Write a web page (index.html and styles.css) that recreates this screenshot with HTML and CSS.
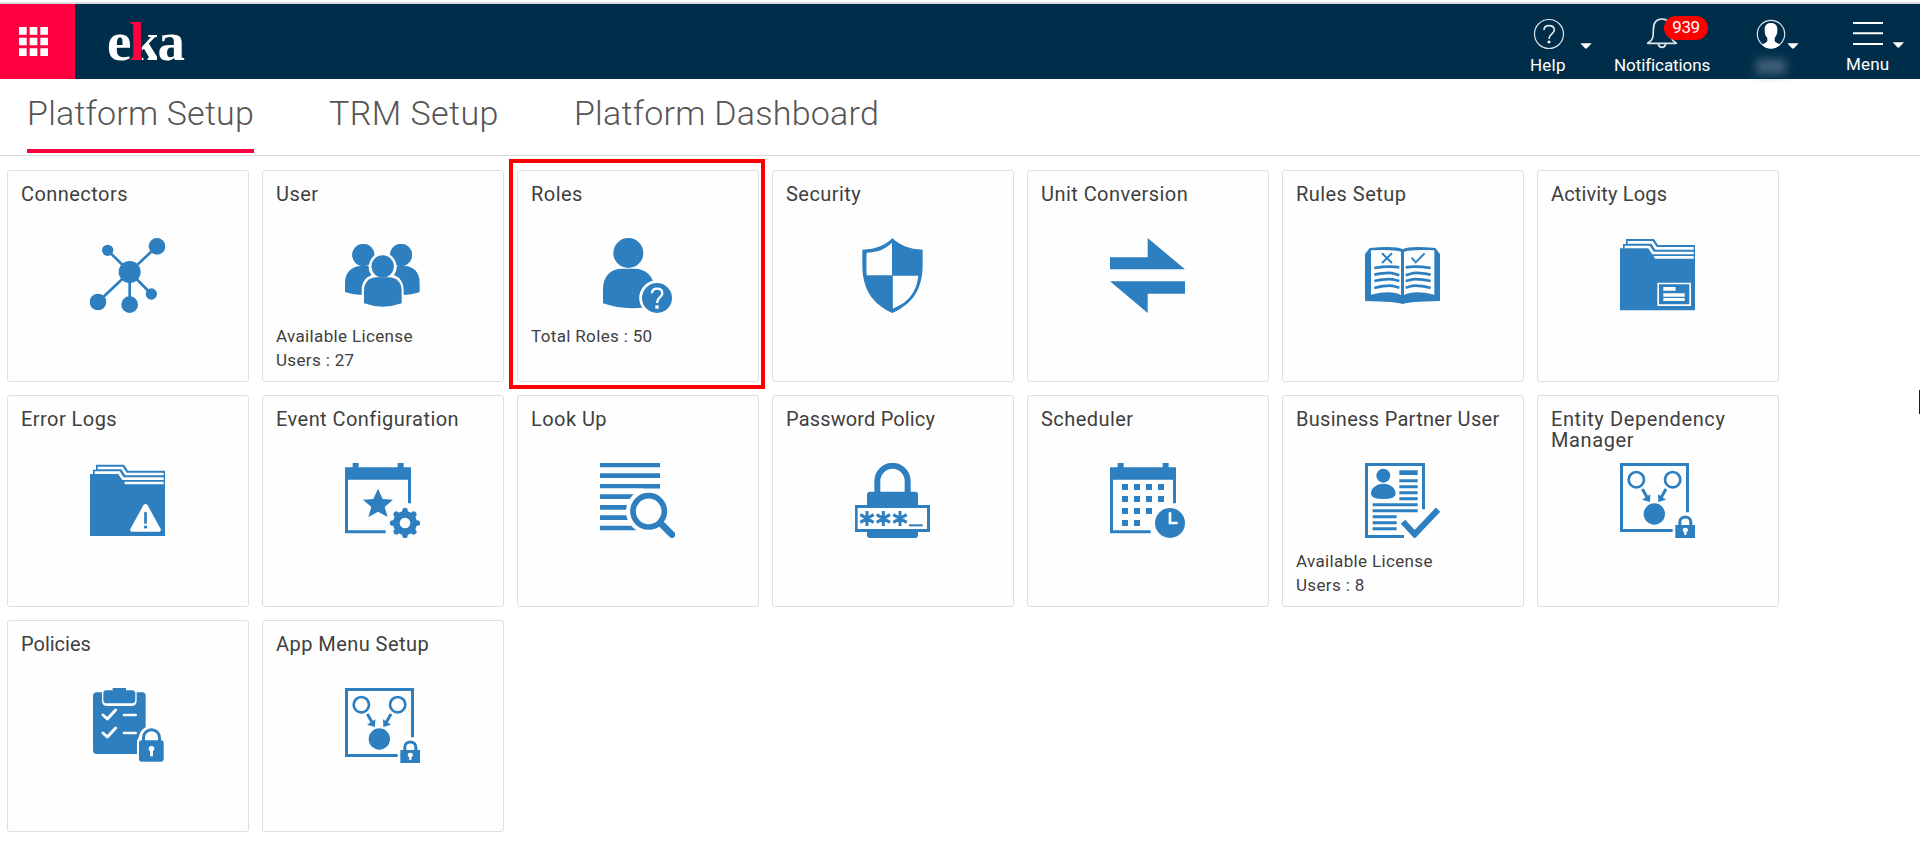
FILE: index.html
```
<!DOCTYPE html>
<html lang="en">
<head>
<meta charset="utf-8">
<title>Platform Setup</title>
<link rel="stylesheet" href="styles.css">
</head>
<body>
<header class="topbar">
  <div class="apps">
    <svg class="apps-icon" viewBox="0 0 87 87"><path d="M0 0h23v23H0zM32 0h23v23H32zM64 0h23v23H64zM0 32h23v23H0zM32 32h23v23H32zM64 32h23v23H64zM0 64h23v23H0zM32 64h23v23H32zM64 64h23v23H64z"/></svg>
  </div>
  <div class="logo">e<span class="logo-k">k</span>a</div>
  <nav class="tools">
    <div class="tool help">
      <svg class="tool-icon" viewBox="75 12 240 150"><circle cx="147" cy="102" r="43.500" class="thin"/><path d="M132 90q0-13 15-13 16 0 16 13c0 12-16 12-16 27" class="thin q"/><path class="solid" d="M143 122h8v8h-8zM241 130h34l-14 15q-3 2-6 0z"/></svg>
      <span class="label">Help</span>
    </div>
    <div class="tool notif">
      <svg class="tool-icon" viewBox="315 12 420 150"><path class="thin bell" d="M443 130c18-10 17-22 17-40 0-20 8-33 26-33s26 13 26 33c0 18-1 30 17 40zM475 132q2 10 11 10t11-10"/></svg>
      <span class="badge">939</span>
      <span class="label">Notifications</span>
    </div>
    <div class="tool user">
      <svg class="tool-icon" viewBox="735 12 285 150"><circle cx="813" cy="102" r="41" class="thin"/><path class="solid" d="M813 69c14 0 20 9 19 22 0 12-4 18-8 23v8c2 6 9 7 17 12q-12 12-28 12t-28-12c8-5 15-6 17-12v-8c-5-5-8-11-8-23-1-13 5-22 19-22zM862 130h34l-14 15q-3 2-6 0z"/></svg>
      <span class="masked"></span>
    </div>
    <div class="tool menu">
      <svg class="tool-icon" viewBox="1020 12 240 150"><path class="solid" d="M1059 66h90v6h-90zM1059 97h90v6h-90zM1059 129h90v6h-90zM1178 127h34l-14 15q-3 2-6 0z"/></svg>
      <span class="label">Menu</span>
    </div>
  </nav>
</header>
<nav class="tabs">
  <a class="tab active">Platform Setup</a>
  <a class="tab wide">TRM Setup</a>
  <a class="tab">Platform Dashboard</a>
</nav>
<main class="grid">
  <section class="card"><h2 class="title">Connectors</h2>
    <svg class="icon" viewBox="270 234 225 225"><path class="s8" d="M323 271l66 65 82-77M389 336l-95 90M389 336v98M389 336l65 66"/><circle cx="389" cy="336" r="33"/><circle cx="471" cy="259" r="25"/><circle cx="323" cy="271" r="17"/><circle cx="294" cy="426" r="25"/><circle cx="389" cy="434" r="25"/><circle cx="454" cy="402" r="17"/></svg>
  </section>
  <section class="card"><h2 class="title">User</h2>
    <svg class="icon" viewBox="1035 234 225 225"><circle cx="1090" cy="285" r="33"/><circle cx="1203" cy="285" r="33"/><path d="M1035 396v-28c0-30 20-50 48-50h130c28 0 46 20 46 50v28q-24 9-54 9h-110q-36 0-60-9z"/><path class="w" d="M1085 405v-13c0-25 12-40 29-46a42 42 0 1 1 68 0c18 6 29 22 29 46v50h-126zM1124 318V240h48v78z"/><circle cx="1090" cy="285" r="33"/><circle cx="1203" cy="285" r="33"/><circle class="w" cx="1148" cy="319" r="41"/><circle cx="1148" cy="319" r="33.500"/><path d="M1092 430v-38c0-25 16-40 38-40h36c24 0 39 16 39 40v38q-57 20-113 0z"/></svg>
    <p class="detail">Available License<br>Users : 27</p>
  </section>
  <section class="card highlight"><h2 class="title">Roles</h2>
    <svg class="icon" viewBox="285 249 225 225"><circle cx="370" cy="294" r="45"/><path d="M294 445v-45c0-36 24-59 56-59h38c32 0 56 19 62 59v52q-85 18-156-7z"/><circle class="w" cx="456" cy="429" r="53.500"/><circle cx="456" cy="429" r="45"/><path class="ws7" d="M441 415q0-14 15-14 16 0 16 14c0 12-16 12-16 29"/><path class="w" d="M451 451h10v10h-10z"/></svg>
    <p class="detail">Total Roles : 50</p>
  </section>
  <section class="card"><h2 class="title">Security</h2>
    <svg class="icon" viewBox="1050 249 225 225"><path d="M1162 249c20 20 50 34 91 35v46c0 70-28 116-91 144-62-28-90-74-90-144v-46c42-1 72-15 90-35z"/><path class="w" d="M1161 263v98h-76c-1-20-1-45 0-68 30-1 56-10 76-30zM1163.500 362.500h76c-3 40-24 80-76 98z"/></svg>
  </section>
  <section class="card"><h2 class="title">Unit Conversion</h2>
    <svg class="icon" viewBox="270 234 225 225"><path d="M383 234l112 94H270v-36h113zM270 364h225v37H383v58z"/></svg>
  </section>
  <section class="card"><h2 class="title">Rules Setup</h2>
    <svg class="icon" viewBox="1035 234 225 225"><path d="M1035 282l14-18q80-7 99 4 20-11 98-4l14 18v141q-95 2-112 9-18-7-113-9z"/><path class="w" d="M1053 271q67-4 90 4v130q-30-16-90-1zM1152 275q24-8 91-4v133q-60-15-91 1z"/><path class="s8" d="M1063 324q44-7 75-2M1063 344q44-9 60-3l15 5M1063 363q44-9 60-4l15 4M1063 384q44-11 60-5l15 4M1232 324q-44-7-75-2M1232 344q-44-9-60-3l-15 5M1232 363q-44-9-60-4l-15 4M1232 384q-44-11-60-5l-15 4"/><path class="s6" d="M1086 280l30 29M1116 280l-30 29M1175 293l12 14 27-27"/></svg>
  </section>
  <section class="card"><h2 class="title snug">Activity Logs</h2>
    <svg class="icon" viewBox="300 234 225 225"><path d="M300 265h9v-13h9v-15h84l12 18h111v196H300z"/><path class="ws8" d="M323 247h73l12 18h113M314 261h73l12 18h122M404 292h117"/><path class="w" d="M400 288h8v8z"/><path class="ws5" d="M414.500 370.500h96v65h-96z"/><path class="w" d="M430 381h37v11h-37zM430 400h64v10h-64zM430 414h64v9h-64z"/></svg>
  </section>
  <section class="card"><h2 class="title">Error Logs</h2>
    <svg class="icon" viewBox="270 234 225 225"><path d="M270 267h9v-13h9v-15h84l12 18h111v196H270z"/><path class="ws8" d="M293 249h73l12 18h113M284 263h73l12 18h122M374 294h117"/><path class="w" d="M430 361q6-8 13 0l39 71q2 8-5 8h-81q-7 0-5-8z"/><path class="s8" d="M436.500 384v29" stroke-linecap="round"/><path d="M432 422h9v8h-9z"/></svg>
  </section>
  <section class="card"><h2 class="title">Event Configuration</h2>
    <svg class="icon" viewBox="1035 234 225 225"><path d="M1035 247h23v-13h18v13h117v-13h18v13h22v108h-9v-71h-180v152h113v9h-122z"/><path d="M1134 311l14 31 31 2-25 22 9 30-29-16-29 16 9-30-25-22 31-2z"/><circle cx="1215" cy="414" r="36"/><path class="gear" d="M1215 377v74M1178 414h74M1189 388l52 52M1241 388l-52 52"/><circle class="w" cx="1215" cy="414" r="16"/></svg>
  </section>
  <section class="card"><h2 class="title">Look Up</h2>
    <svg class="icon" viewBox="270 234 225 225"><path d="M270 234h180v13H270zM270 265h180v14H270zM270 297h180v13H270zM270 328h110v14H270zM270 360h110v14H270zM270 391h110v14H270zM270 422h120v14H270z"/><circle class="w" cx="416" cy="379" r="68"/><path d="M400 297h50v13h-50z"/><circle class="ring17" cx="416" cy="379" r="47"/><path class="handle" d="M452 415l34 34"/></svg>
  </section>
  <section class="card"><h2 class="title snug">Password Policy</h2>
    <svg class="icon" viewBox="1035 234 225 225"><path class="s18" d="M1102 325v-37a45.500 45.500 0 0 1 91 0v37"/><rect x="1071" y="320" width="153" height="139" rx="9"/><path d="M1035 360h225v81h-225z"/><path class="w" d="M1043 369h208v63h-208z"/><path class="s9" d="M1071 378v45M1051 389l40 23M1091 389l-40 23M1120 378v45M1100 389l40 23M1140 389l-40 23M1170 378v45M1150 389l40 23M1190 389l-40 23"/><path d="M1197 418h41v6h-41z"/></svg>
  </section>
  <section class="card"><h2 class="title">Scheduler</h2>
    <svg class="icon" viewBox="270 234 225 225"><path d="M270 247h23v-13h18v13h117v-13h18v13h22v108h-9v-71H279v152h113v9H270z"/><path d="M306 297h18v18h-18zM342 297h18v18h-18zM378 297h18v18h-18zM414 297h18v18h-18zM306 333h18v18h-18zM342 333h18v18h-18zM378 333h18v18h-18zM414 333h18v18h-18zM306 369h18v18h-18zM342 369h18v18h-18zM378 369h18v18h-18zM306 405h18v18h-18zM342 405h18v18h-18z"/><circle cx="450" cy="414" r="45"/><path class="ws8" d="M450 382v32h23"/></svg>
  </section>
  <section class="card"><h2 class="title mid">Business Partner User</h2>
    <svg class="icon" viewBox="1035 234 225 225"><path d="M1035 234h180v139h-9V243h-162v207h108v9h-117z"/><circle cx="1090" cy="272" r="21"/><path d="M1053 326c0-17 16-30 37-30s37 13 37 30q0 16-37 16t-37-16zM1138 256h55v14h-55zM1138 283h55v9h-55zM1138 301h55v9h-55zM1138 319h55v9h-55zM1138 337h55v9h-55zM1058 355h135v9h-135zM1058 373h135v9h-135zM1058 391h72v9h-72zM1058 409h72v9h-72zM1058 427h72v9h-72z"/><path class="s18" d="M1149 410l35 38 70-74"/></svg>
    <p class="detail">Available License<br>Users : 8</p>
  </section>
  <section class="card"><h2 class="title loose">Entity Dependency Manager</h2>
    <svg class="icon" viewBox="300 234 225 225"><g id="entity"><path d="M300 234h207v148h-9V243H309v189h149v9H300z"/><path class="s8" d="M372 284a23 23 0 1 1-46 0 23 23 0 0 1 46 0zM481 284a23 23 0 1 1-46 0 23 23 0 0 1 46 0z"/><circle cx="403" cy="387" r="32"/><path class="s9" d="M367 312l15 26M438 312l-15 26"/><path d="M391 328l-1 23-24-7zM414 328l1 23 23-7zM466 420h59v39h-59z"/><path class="s9" d="M479.500 422v-11a16.500 15 0 0 1 33 0v11"/><path class="w" d="M488 434q0-6 8-6t8 6q0 5-4 7l-1 9h-6l-1-9q-4-2-4-7z"/></g></svg>
  </section>
  <section class="card"><h2 class="title flat">Policies</h2>
    <svg class="icon" viewBox="270 234 225 225"><rect x="279" y="247" width="158" height="185" rx="11"/><path class="w" d="M306 240h104v32q0 16-16 16h-72q-16 0-16-16z"/><path d="M310 251q0-10 10-10h18v-7h40v7h17q11 0 11 10v18q0 11-11 11h-74q-11 0-11-11z"/><path class="check" d="M309 315l13 12 25-27M309 369l13 12 25-27"/><path class="ws8" d="M372 315h35M372 369h35" stroke-linecap="round"/><path class="w" d="M411 459v-68q4-4 6-12c3-18 18-31 37-31h41v111z"/><path class="s9" d="M430.500 396v-13a24 24 0 0 1 48 0v13"/><rect x="417" y="391" width="74" height="64" rx="7"/><path class="w" d="M446 416q0-8 8.500-8t8.500 8q0 5-4 7v16h-9v-16q-4-2-4-7z"/></svg>
  </section>
  <section class="card"><h2 class="title">App Menu Setup</h2>
    <svg class="icon" viewBox="300 234 225 225"><use href="#entity"/></svg>
  </section>
</main>
<div class="edge-mark"></div>
</body>
</html>
```
FILE: styles.css
```
* { box-sizing: border-box; }
body { margin: 0; height: 843px; overflow: hidden; background: #fff; font-family: Roboto, "Liberation Sans", sans-serif; color: #3f3f3f; }
.topbar { display: flex; height: 77px; margin-top: 2px; border-top: 2px solid #d9dbde; background: #002e4a; color: #fff; }
.apps { width: 75px; height: 75px; background: #ff0041; padding: 23px 19px; }
.apps-icon { display: block; width: 29px; height: 29px; fill: #fff; }
.logo { margin-left: 32px; font: bold 55px/75px "Liberation Serif", serif; letter-spacing: -2.3px; height: 75px; }
.logo-k { color: transparent; background: linear-gradient(90deg, #ff0041 13px, #fff 13px); -webkit-background-clip: text; background-clip: text; }
.tools { display: flex; margin-left: auto; }
.tool { position: relative; height: 75px; }
.help { width: 80px; }
.notif { width: 140px; }
.user { width: 95px; }
.menu { width: 80px; }
.tool-icon { display: block; width: 100%; height: 50px; }
.thin { fill: none; stroke: #dfe6ea; stroke-width: 3.500; }
.q { stroke-width: 5; }
.bell { stroke-width: 5; stroke-linejoin: round; }
.solid { fill: #fff; }
.label { display: block; font-size: 17px; line-height: 22px; }
.help .label { margin-left: 5px; letter-spacing: .2px; }
.notif .label { margin-left: 9px; letter-spacing: -.08px; }
.menu .label { margin-left: 6px; line-height: 20px; letter-spacing: .2px; }
.badge { position: absolute; left: 59px; top: 12px; width: 44px; height: 24px; border-radius: 12px; background: #f00; font-size: 17px; line-height: 23px; text-align: center; letter-spacing: -.4px; }
.masked { display: block; width: 30px; height: 15px; margin: 5px 0 0 11px; background: #3f5f77; filter: blur(4px); }
.tabs { display: flex; height: 77px; padding-left: 27px; gap: 75px; border-bottom: 1px solid #d9dadb; }
.tab { height: 74px; font-size: 34px; font-weight: 300; line-height: 69px; white-space: nowrap; letter-spacing: .26px; color: #555; }
.wide { letter-spacing: .45px; }
.active { width: 227px; border-bottom: 4px solid #ff0041; letter-spacing: .2px; }
.grid { display: grid; grid-template-columns: repeat(7, 242px); grid-auto-rows: 212px; gap: 13px; padding: 14px 0 0 7px; }
.card { position: relative; display: flex; flex-direction: column; border: 1px solid #dedfdf; border-radius: 3px; background: #fefefe; padding: 13px 13px 0; }
.highlight::after { content: ""; position: absolute; box-sizing: border-box; left: -9px; top: -12px; width: 256px; height: 230px; border: 4px solid #f00; }
.title { margin: 0; height: 54px; font-size: 20px; font-weight: 400; line-height: 21px; letter-spacing: .45px; }
.snug { letter-spacing: .15px; }
.mid { letter-spacing: .3px; }
.loose { letter-spacing: .6px; }
.flat { letter-spacing: 0; }
.icon { display: block; flex: none; width: 75px; height: 75px; margin-left: 69px; fill: #2d7fbf; }
.detail { margin: 11px 0 0; font-size: 17px; line-height: 24px; letter-spacing: .35px; }
.w { fill: #fefefe; }
.s6, .s8, .s9, .s18, .gear, .ring17, .handle { fill: none; stroke: #2d7fbf; }
.s6 { stroke-width: 6; }
.s8 { stroke-width: 8; }
.s9 { stroke-width: 9; }
.s18 { stroke-width: 18; }
.gear { stroke-width: 17; stroke-linecap: round; }
.ring17 { stroke-width: 17; }
.handle { stroke-width: 20; stroke-linecap: round; }
.ws5, .ws7, .ws8, .check { fill: none; stroke: #fefefe; }
.ws5 { stroke-width: 5; }
.ws7 { stroke-width: 7; }
.ws8 { stroke-width: 8; }
.check { stroke-width: 9; stroke-linecap: round; stroke-linejoin: round; }
.edge-mark { position: absolute; right: 0; top: 390px; width: 1px; height: 24px; background: #1b1b24; }
```
